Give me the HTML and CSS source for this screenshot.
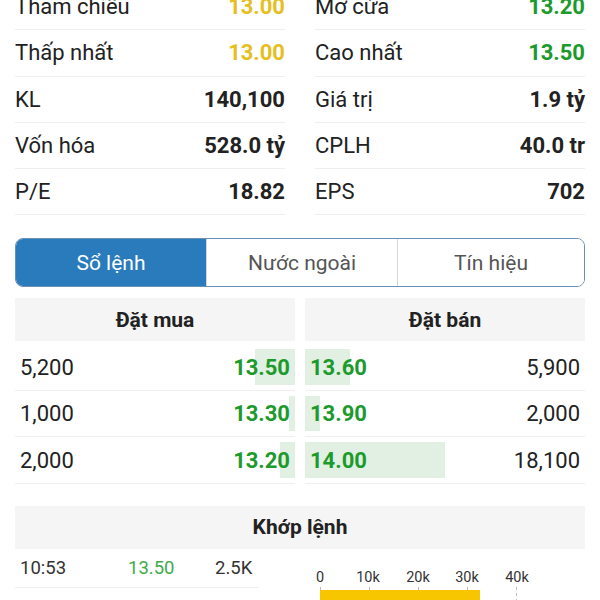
FILE: index.html
```html
<!DOCTYPE html>
<html lang="vi">
<head>
<meta charset="utf-8">
<title>Chi tiết cổ phiếu</title>
<link rel="stylesheet" href="styles.css">
</head>
<body>
<div class="stats">
  <div class="col">
    <div class="row"><span class="lbl">Tham chiếu</span><span class="val ref">13.00</span></div>
    <div class="row"><span class="lbl">Thấp nhất</span><span class="val ref">13.00</span></div>
    <div class="row"><span class="lbl">KL</span><span class="val">140,100</span></div>
    <div class="row"><span class="lbl">Vốn hóa</span><span class="val">528.0 tỷ</span></div>
    <div class="row"><span class="lbl">P/E</span><span class="val">18.82</span></div>
  </div>
  <div class="col">
    <div class="row"><span class="lbl">Mở cửa</span><span class="val up">13.20</span></div>
    <div class="row"><span class="lbl">Cao nhất</span><span class="val up">13.50</span></div>
    <div class="row"><span class="lbl">Giá trị</span><span class="val">1.9 tỷ</span></div>
    <div class="row"><span class="lbl">CPLH</span><span class="val">40.0 tr</span></div>
    <div class="row"><span class="lbl">EPS</span><span class="val">702</span></div>
  </div>
</div>

<div class="tabs">
  <div class="tab active">Sổ lệnh</div>
  <div class="tab">Nước ngoài</div>
  <div class="tab">Tín hiệu</div>
</div>

<div class="book">
  <div class="side buy">
    <div class="head">Đặt mua</div>
    <div class="lines">
      <div class="line"><span class="bar" style="width:40px"></span><span class="qty">5,200</span><span class="price">13.50</span></div>
      <div class="line"><span class="bar" style="width:6px"></span><span class="qty">1,000</span><span class="price">13.30</span></div>
      <div class="line"><span class="bar" style="width:15px"></span><span class="qty">2,000</span><span class="price">13.20</span></div>
    </div>
  </div>
  <div class="side sell">
    <div class="head">Đặt bán</div>
    <div class="lines">
      <div class="line"><span class="bar" style="width:45px"></span><span class="price">13.60</span><span class="qty">5,900</span></div>
      <div class="line"><span class="bar" style="width:15px"></span><span class="price">13.90</span><span class="qty">2,000</span></div>
      <div class="line"><span class="bar" style="width:140px"></span><span class="price">14.00</span><span class="qty">18,100</span></div>
    </div>
  </div>
</div>

<div class="match">
  <div class="head">Khớp lệnh</div>
  <div class="match-body">
    <div class="trades">
      <div class="trade"><span class="t-time">10:53</span><span class="t-price">13.50</span><span class="t-vol">2.5K</span></div>
    </div>
    <svg class="chart" width="285" height="60" viewBox="0 0 285 60">
      <g font-family="Roboto, sans-serif" font-size="14.5" fill="#333" text-anchor="middle">
        <text x="20" y="33">0</text>
        <text x="68" y="33">10k</text>
        <text x="118" y="33">20k</text>
        <text x="167" y="33">30k</text>
        <text x="217" y="33">40k</text>
      </g>
      <g stroke="#bbb" stroke-width="1">
        <line x1="20.5" y1="38" x2="20.5" y2="41"/>
        <line x1="69.5" y1="38" x2="69.5" y2="41"/>
        <line x1="118.5" y1="38" x2="118.5" y2="41"/>
        <line x1="167.5" y1="38" x2="167.5" y2="41"/>
        <line x1="216.5" y1="38" x2="216.5" y2="60" stroke-dasharray="3 3"/>
      </g>
      <rect x="20" y="41" width="160" height="19" fill="#f7c600"/>
    </svg>
  </div>
</div>
</body>
</html>
```

FILE: styles.css
```css
* { box-sizing: border-box; }
html, body {
  margin: 0;
  padding: 0;
  background: #fff;
  overflow: hidden;
}
body {
  width: 600px;
  height: 600px;
  font-family: Roboto, "Noto Sans", sans-serif;
  color: #212121;
}

/* stats */
.stats {
  display: grid;
  grid-template-columns: 1fr 1fr;
  column-gap: 30px;
  padding: 0 15px;
  margin-top: -16px;
}
.row {
  height: 46.25px;
  display: flex;
  align-items: center;
  justify-content: space-between;
  border-bottom: 1px solid #efefef;
  font-size: 22px;
}
.lbl { color: #222; }
.val { font-weight: 700; color: #222; }
.val.ref { color: #e6bf1f; }
.val.up { color: #1c9a2c; }

/* tabs */
.tabs {
  margin: 23px 15px 0;
  height: 49px;
  border: 1.5px solid #6a90b3;
  border-radius: 8px;
  overflow: hidden;
  display: grid;
  grid-template-columns: 190px 191px 1fr;
}
.tab {
  display: flex;
  align-items: center;
  justify-content: center;
  font-size: 21px;
  color: #555;
  background: #fff;
  border-left: 1px solid #d6d6d6;
}
.tab.active {
  background: #2a7bbb;
  color: #fff;
  border-left: none;
}

/* order book */
.book {
  display: grid;
  grid-template-columns: 1fr 1fr;
  column-gap: 10px;
  padding: 0 15px;
  margin-top: 11px;
}
.head {
  height: 43px;
  background: #f5f5f5;
  display: flex;
  align-items: center;
  justify-content: center;
  font-weight: 700;
  font-size: 21px;
  color: #222;
}
.lines { padding-top: 3px; }
.line {
  position: relative;
  height: 46.5px;
  display: flex;
  align-items: center;
  justify-content: space-between;
  padding: 0 5px;
  border-bottom: 1px solid #efefef;
  font-size: 22px;
}
.line .bar {
  position: absolute;
  top: 5px;
  bottom: 5px;
  background: #e1f0e2;
}
.buy .bar { right: 0; }
.sell .bar { left: 0; }
.qty { position: relative; color: #222; }
.price { position: relative; font-weight: 700; color: #1c9a2c; }

/* matching */
.match {
  margin-top: 22px;
}
.match .head {
  margin: 0 15px;
}
.match-body {
  display: flex;
}
.trades {
  width: 243px;
  margin-left: 15px;
  margin-right: 42px;
}
.trade {
  height: 39px;
  display: flex;
  align-items: center;
  border-bottom: 1px solid #efefef;
  font-size: 18.5px;
  color: #333;
  padding-left: 5px;
}
.t-time { width: 108px; }
.t-price { width: 87px; color: #3dab4a; }
.t-vol { }
.chart { display: block; flex: none; }
```
